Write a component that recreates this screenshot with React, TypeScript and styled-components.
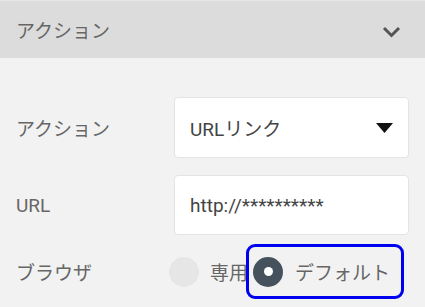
import React from "react";
import styled, { createGlobalStyle } from "styled-components";

const Global = createGlobalStyle`
  html, body { margin: 0; padding: 0; }
  body {
    background: #f2f2f2;
    font-family: Roboto, "Noto Sans CJK JP", sans-serif;
    width: 425px;
    height: 307px;
    overflow: hidden;
  }
`;

const Panel = styled.div`
  width: 425px;
  height: 307px;
  background: #f2f2f2;
  display: flex;
  flex-direction: column;
`;

const Header = styled.div`
  height: 58px;
  flex: none;
  box-sizing: border-box;
  background: #dcdcdc;
  border-top: 1px solid #e6e6e6;
  display: flex;
  align-items: center;
  justify-content: space-between;
  padding: 0 24px 0 16px;
  & > svg {
    margin-top: 4px;
  }
`;

const Title = styled.span`
  font-size: 19px;
  color: #666;
`;

const Body = styled.div`
  display: flex;
  flex-direction: column;
  padding: 39px 16px 0 16px;
`;

const Row = styled.div<{ $h: number; $mt: number }>`
  display: grid;
  grid-template-columns: 158px 235px;
  align-items: center;
  height: ${(p) => p.$h}px;
  margin-top: ${(p) => p.$mt}px;
`;

const Label = styled.span`
  font-size: 19px;
  color: #666;
`;

const Field = styled.div`
  box-sizing: border-box;
  height: 100%;
  background: #fff;
  border: 1px solid #e4e4e4;
  border-radius: 4px;
  display: flex;
  align-items: center;
  justify-content: space-between;
  padding: 0 15px 0 15px;
  font-size: 19px;
  color: #444;
`;

const Radios = styled.div`
  display: flex;
  align-items: center;
  margin-left: -5px;
  height: 55px;
  white-space: nowrap;
`;

const Option = styled.div<{ $focus?: boolean }>`
  display: flex;
  align-items: center;
  flex: none;
  box-sizing: border-box;
  height: 55px;
  gap: ${(p) => (p.$focus ? "12px" : "11px")};
  padding: ${(p) => (p.$focus ? "0 11px 0 4px" : "0")};
  margin-left: ${(p) => (p.$focus ? "-2px" : "0")};
  border: ${(p) => (p.$focus ? "3px solid #0000f0" : "none")};
  border-radius: 9px;
`;

const Dot = styled.span<{ $on?: boolean }>`
  width: 30px;
  height: 30px;
  border-radius: 50%;
  flex: none;
  background: ${(p) => (p.$on ? "#45525d" : "#e6e6e6")};
  display: flex;
  align-items: center;
  justify-content: center;
  &::after {
    content: "";
    width: 9px;
    height: 9px;
    border-radius: 50%;
    background: #fff;
    display: ${(p) => (p.$on ? "block" : "none")};
  }
`;

const OptText = styled.span`
  font-size: 19px;
  color: #666;
  white-space: nowrap;
`;

export default function App() {
  return (
    <>
      <Global />
      <Panel>
        <Header>
          <Title>アクション</Title>
          <svg width="19" height="12" viewBox="0 0 19 12">
            <path d="M2 2 L9.5 9.5 L17 2" fill="none" stroke="#555" strokeWidth="3" />
          </svg>
        </Header>
        <Body>
          <Row $h={61} $mt={0}>
            <Label>アクション</Label>
            <Field>
              <span>URLリンク</span>
              <svg width="17" height="10" viewBox="0 0 17 10">
                <path d="M0 0 H17 L8.5 10 Z" fill="#111" />
              </svg>
            </Field>
          </Row>
          <Row $h={60} $mt={17}>
            <Label>URL</Label>
            <Field>
              <span>http://**********</span>
            </Field>
          </Row>
          <Row $h={55} $mt={9}>
            <Label>ブラウザ</Label>
            <Radios>
              <Option>
                <Dot />
                <OptText>専用</OptText>
              </Option>
              <Option $focus>
                <Dot $on />
                <OptText>デフォルト</OptText>
              </Option>
            </Radios>
          </Row>
        </Body>
      </Panel>
    </>
  );
}
